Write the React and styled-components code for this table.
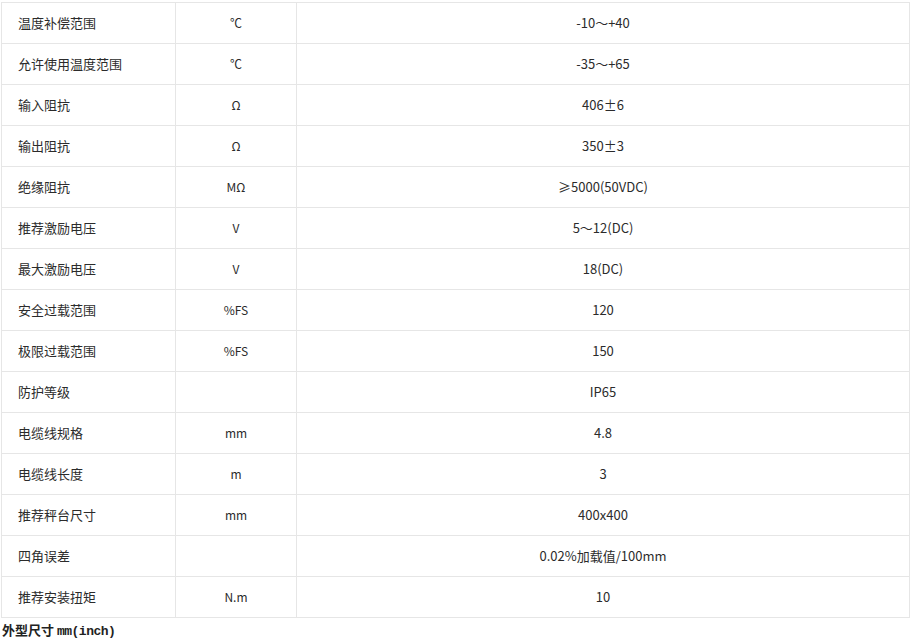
import React from "react";
import styled, { createGlobalStyle } from "styled-components";

const GlobalStyle = createGlobalStyle`
  body {
    margin: 0;
    background: #fff;
    font-family: "Noto Sans CJK SC", "DejaVu Sans", sans-serif;
    color: #333;
  }
`;

const Page = styled.div`
  padding: 2px 0 0 1px;
  width: 909px;
`;

const SpecTable = styled.table`
  width: 909px;
  border-collapse: collapse;
  table-layout: fixed;
  border: 1px solid #e6e6e6;
  font-size: 13px;
`;

const Cell = styled.td`
  height: 39px;
  padding: 0 0 1px ${(p) => (p.$left ? "16px" : "0")};
  border: 1px solid #e6e6e6;
  text-align: ${(p) => (p.$left ? "left" : "center")};
  vertical-align: middle;
  color: #2b2b2b;
  font-size: ${(p) => (p.$small ? "12px" : "13px")};
  white-space: nowrap;
`;

const Heading = styled.div`
  margin-top: 3px;
  padding-left: 1px;
  font-size: 13px;
  font-weight: bold;
  line-height: 18px;
  color: #222;
`;

const Latin = styled.span`
  font-family: "Liberation Mono", "DejaVu Sans Mono", monospace;
  letter-spacing: -0.5px;
`;

const rows = [
  ["温度补偿范围", "℃", "-10～+40"],
  ["允许使用温度范围", "℃", "-35～+65"],
  ["输入阻抗", "Ω", "406±6"],
  ["输出阻抗", "Ω", "350±3"],
  ["绝缘阻抗", "MΩ", "≥5000(50VDC)"],
  ["推荐激励电压", "V", "5～12(DC)"],
  ["最大激励电压", "V", "18(DC)"],
  ["安全过载范围", "%FS", "120"],
  ["极限过载范围", "%FS", "150"],
  ["防护等级", "", "IP65"],
  ["电缆线规格", "mm", "4.8"],
  ["电缆线长度", "m", "3"],
  ["推荐秤台尺寸", "mm", "400x400"],
  ["四角误差", "", "0.02%加载值/100mm"],
  ["推荐安装扭矩", "N.m", "10"],
];

export default function App() {
  return (
    <Page>
      <GlobalStyle />
      <SpecTable>
        <colgroup>
          <col style={{ width: 174 }} />
          <col style={{ width: 121 }} />
          <col />
        </colgroup>
        <tbody>
          {rows.map(([name, unit, value]) => (
            <tr key={name}>
              <Cell $left>{name}</Cell>
              <Cell $small>{unit}</Cell>
              <Cell>{value}</Cell>
            </tr>
          ))}
        </tbody>
      </SpecTable>
      <Heading>
        外型尺寸 <Latin>mm(inch)</Latin>
      </Heading>
    </Page>
  );
}
